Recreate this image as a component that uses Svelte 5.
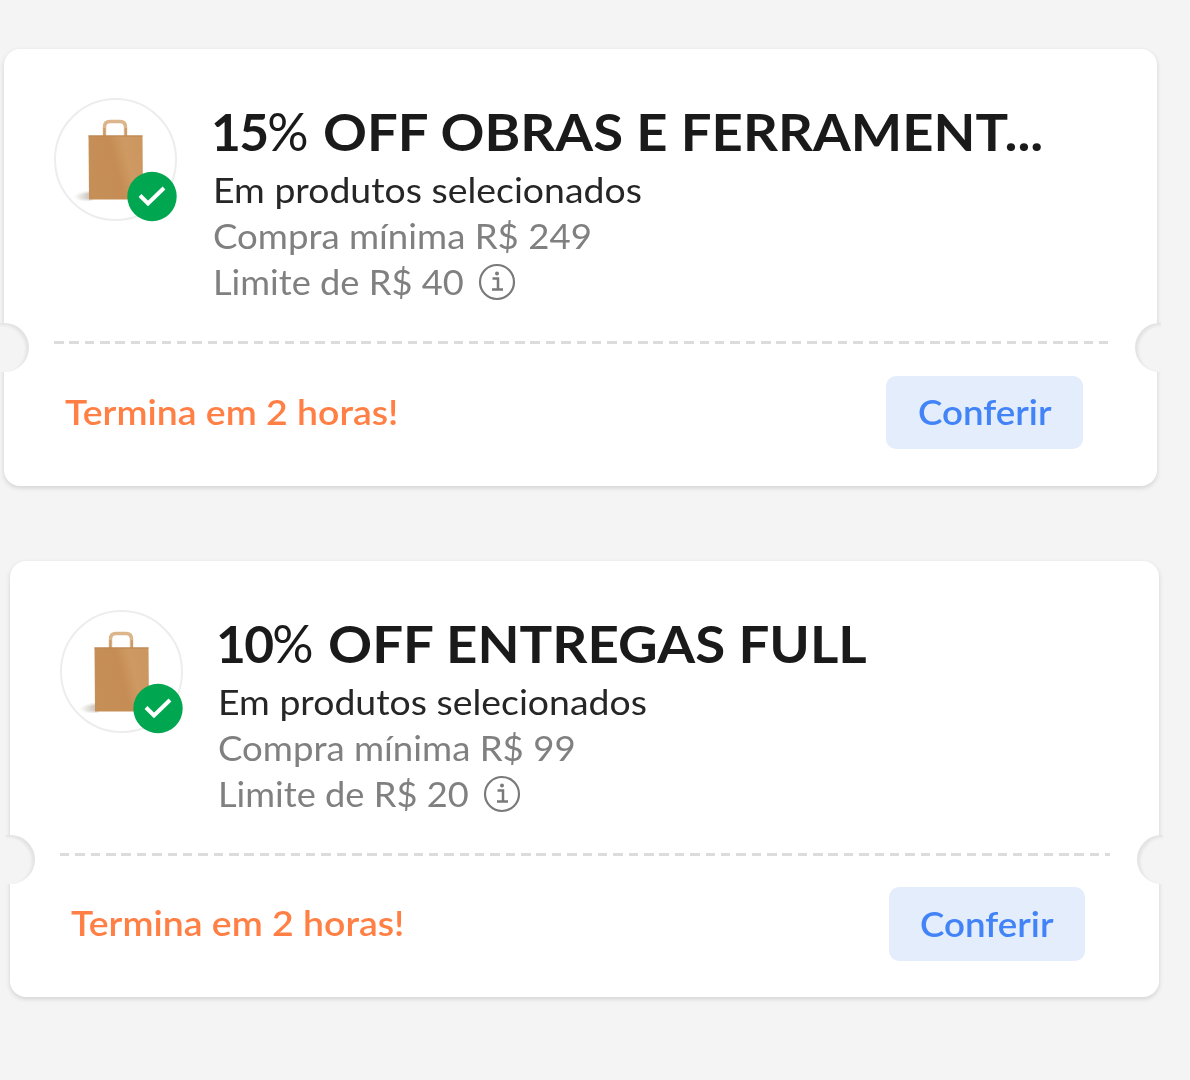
<script lang="ts">
  type Coupon = {
    id: string;
    amount: string;
    title: string;
    scope: string;
    minimum: string;
    limit: string;
    expires: string;
  };

  const coupons: Coupon[] = [
    {
      id: 'obras',
      amount: '15',
      title: 'OFF OBRAS E FERRAMENT...',
      scope: 'Em produtos selecionados',
      minimum: 'Compra mínima R$ 249',
      limit: 'Limite de R$ 40',
      expires: 'Termina em 2 horas!',
    },
    {
      id: 'full',
      amount: '10',
      title: 'OFF ENTREGAS FULL',
      scope: 'Em produtos selecionados',
      minimum: 'Compra mínima R$ 99',
      limit: 'Limite de R$ 20',
      expires: 'Termina em 2 horas!',
    },
  ];
</script>

<main class="coupons">
  {#each coupons as coupon (coupon.id)}
    <article class="card {coupon.id}">
      <span class="notch left"></span>
      <span class="notch right"></span>

      <div class="body">
        <svg class="thumb" viewBox="0 0 124 124" aria-hidden="true">
          <defs>
            <linearGradient id="paper-{coupon.id}" x1="0" y1="0.6" x2="1" y2="0.3">
              <stop offset="0" stop-color="#c68f58" />
              <stop offset="0.5" stop-color="#c58d55" />
              <stop offset="0.72" stop-color="#ce9962" />
              <stop offset="1" stop-color="#cc975f" />
            </linearGradient>
            <linearGradient id="shade-{coupon.id}" x1="0" y1="0" x2="1" y2="0">
              <stop offset="0" stop-color="#8a7a6a" stop-opacity="0" />
              <stop offset="1" stop-color="#8a7a6a" stop-opacity="0.5" />
            </linearGradient>
            <filter id="soft-{coupon.id}"><feGaussianBlur stdDeviation="1.2" /></filter>
          </defs>
          <circle cx="61.5" cy="61.5" r="60.5" fill="#fff" stroke="#ededed" stroke-width="2" />
          <path d="M19 99 Q27 94 38 94 V102 H27Z" fill="url(#shade-{coupon.id})" filter="url(#soft-{coupon.id})" />
          <path d="M50.5 38 V29 Q50.5 23.5 56 23.5 H66 Q71.5 23.5 71.5 29 V38" fill="none" stroke="#dcb68a" stroke-width="3.4" />
          <path d="M50.3 38 V30 M72 38 V30" fill="none" stroke="#cb9c6b" stroke-width="2" />
          <path d="M34.5 37.5 H88.5 L89 101.5 H35Z" fill="url(#paper-{coupon.id})" />
          <path d="M34.5 38 H88.5" stroke="#b98552" stroke-width="1.2" />
          <circle cx="98" cy="98.5" r="24.7" fill="#00a650" />
          <path d="M86 97.5 L94 105.5 L110 90" fill="none" stroke="#fff" stroke-width="4" />
        </svg>

        <div class="info">
          <h2>
            <span class="amount">{coupon.amount}<span class="percent">%</span></span>
            <span class="wide title">{coupon.title}</span>
          </h2>
          <p class="scope"><span class="wide">{coupon.scope}</span></p>
          <p class="rule"><span class="wide">{coupon.minimum}</span></p>
          <p class="rule limit">
            <span class="wide">{coupon.limit}</span>
            <svg class="hint" viewBox="0 0 38 38" fill="none" stroke="#7a7a7a" aria-hidden="true">
              <circle cx="19" cy="19" r="17" stroke-width="2.2" />
              <path d="M14.5 15.5 H20 V26 M14 26.5 H25" stroke-width="2.5" />
              <circle cx="19" cy="10.5" r="2" fill="#7a7a7a" stroke="none" />
            </svg>
          </p>
        </div>
      </div>

      <div class="divider"></div>

      <div class="footer">
        <span class="wide expires">{coupon.expires}</span>
        <button type="button"><span class="wide">Conferir</span></button>
      </div>
    </article>
  {/each}
</main>

<style>
  :global(body) { margin: 0; background: #f4f4f4; }

  .coupons {
    box-sizing: border-box;
    min-height: 1080px;
    padding: 49px 31px 0 4px;
    display: flex;
    flex-direction: column;
    gap: 75px;
    font-family: Lato, "Open Sans", sans-serif;
  }

  .card {
    position: relative;
    box-sizing: border-box;
    width: 1153px;
    height: 437px;
    padding: 49px 50px 0;
    border-radius: 16px;
    background: #fff;
    box-shadow: 0 2px 5px rgba(0, 0, 0, .14);
  }
  .card.full { width: 1149px; height: 436px; margin-left: 6px; }

  /* half circles cut out of both edges */
  .notch { position: absolute; top: 274px; width: 29px; height: 49px; background: #f4f4f4; }
  .notch.left { left: -4px; border-radius: 0 25px 25px 0; box-shadow: inset -3px 2px 3px rgba(0, 0, 0, .07); }
  .notch.right { right: -4px; width: 26px; border-radius: 25px 0 0 25px; box-shadow: inset 3px 2px 3px rgba(0, 0, 0, .07); }

  .body { display: flex; gap: 35px; height: 243px; }
  .full .body { gap: 34px; }
  .thumb { flex: none; width: 124px; height: 124px; overflow: visible; }

  .wide { display: inline-block; transform: scaleX(1.1); transform-origin: left center; }

  .info { padding-top: 3px; }
  h2 { display: flex; margin: 0 0 6px -2px; font-size: 51.5px; line-height: 60px; font-weight: 700; color: #1a1a1a; white-space: nowrap; }
  .amount { flex: 0 0 112px; letter-spacing: -1.7px; }
  .percent { font-weight: 400; letter-spacing: 0; }
  .title { transform: scaleX(1.057); }
  .full .title { transform: scaleX(1.061); }
  p { margin: 0; font-size: 34px; line-height: 46px; white-space: nowrap; }
  .scope { color: #262626; }
  .rule { color: #808080; }
  .rule .wide { transform: scaleX(1.076); }
  .limit { display: flex; align-items: center; gap: 30px; }
  .limit .wide { transform: scaleX(1.065); }
  .hint { width: 38px; height: 38px; }

  .divider {
    height: 3px;
    margin-right: -1px;
    background: repeating-linear-gradient(90deg, #dcdcdc 0 9.5px, transparent 9.5px 15.37px);
  }

  .footer { display: flex; justify-content: space-between; align-items: center; padding: 32px 24px 0 11px; }
  .full .footer { padding-top: 31px; }
  .expires { margin-top: -2px; font-size: 34px; line-height: 46px; font-weight: 600; color: #ff7f45; }
  button {
    width: 197px;
    height: 73px;
    padding: 0 0 2px;
    border: 0;
    border-radius: 10px;
    background: #e3edfb;
    color: #4284f7;
    font: 600 34px/71px Lato, "Open Sans", sans-serif;
  }
  .full button { width: 196px; height: 74px; }
  button .wide { transform: scaleX(1.08); transform-origin: center; }
</style>
